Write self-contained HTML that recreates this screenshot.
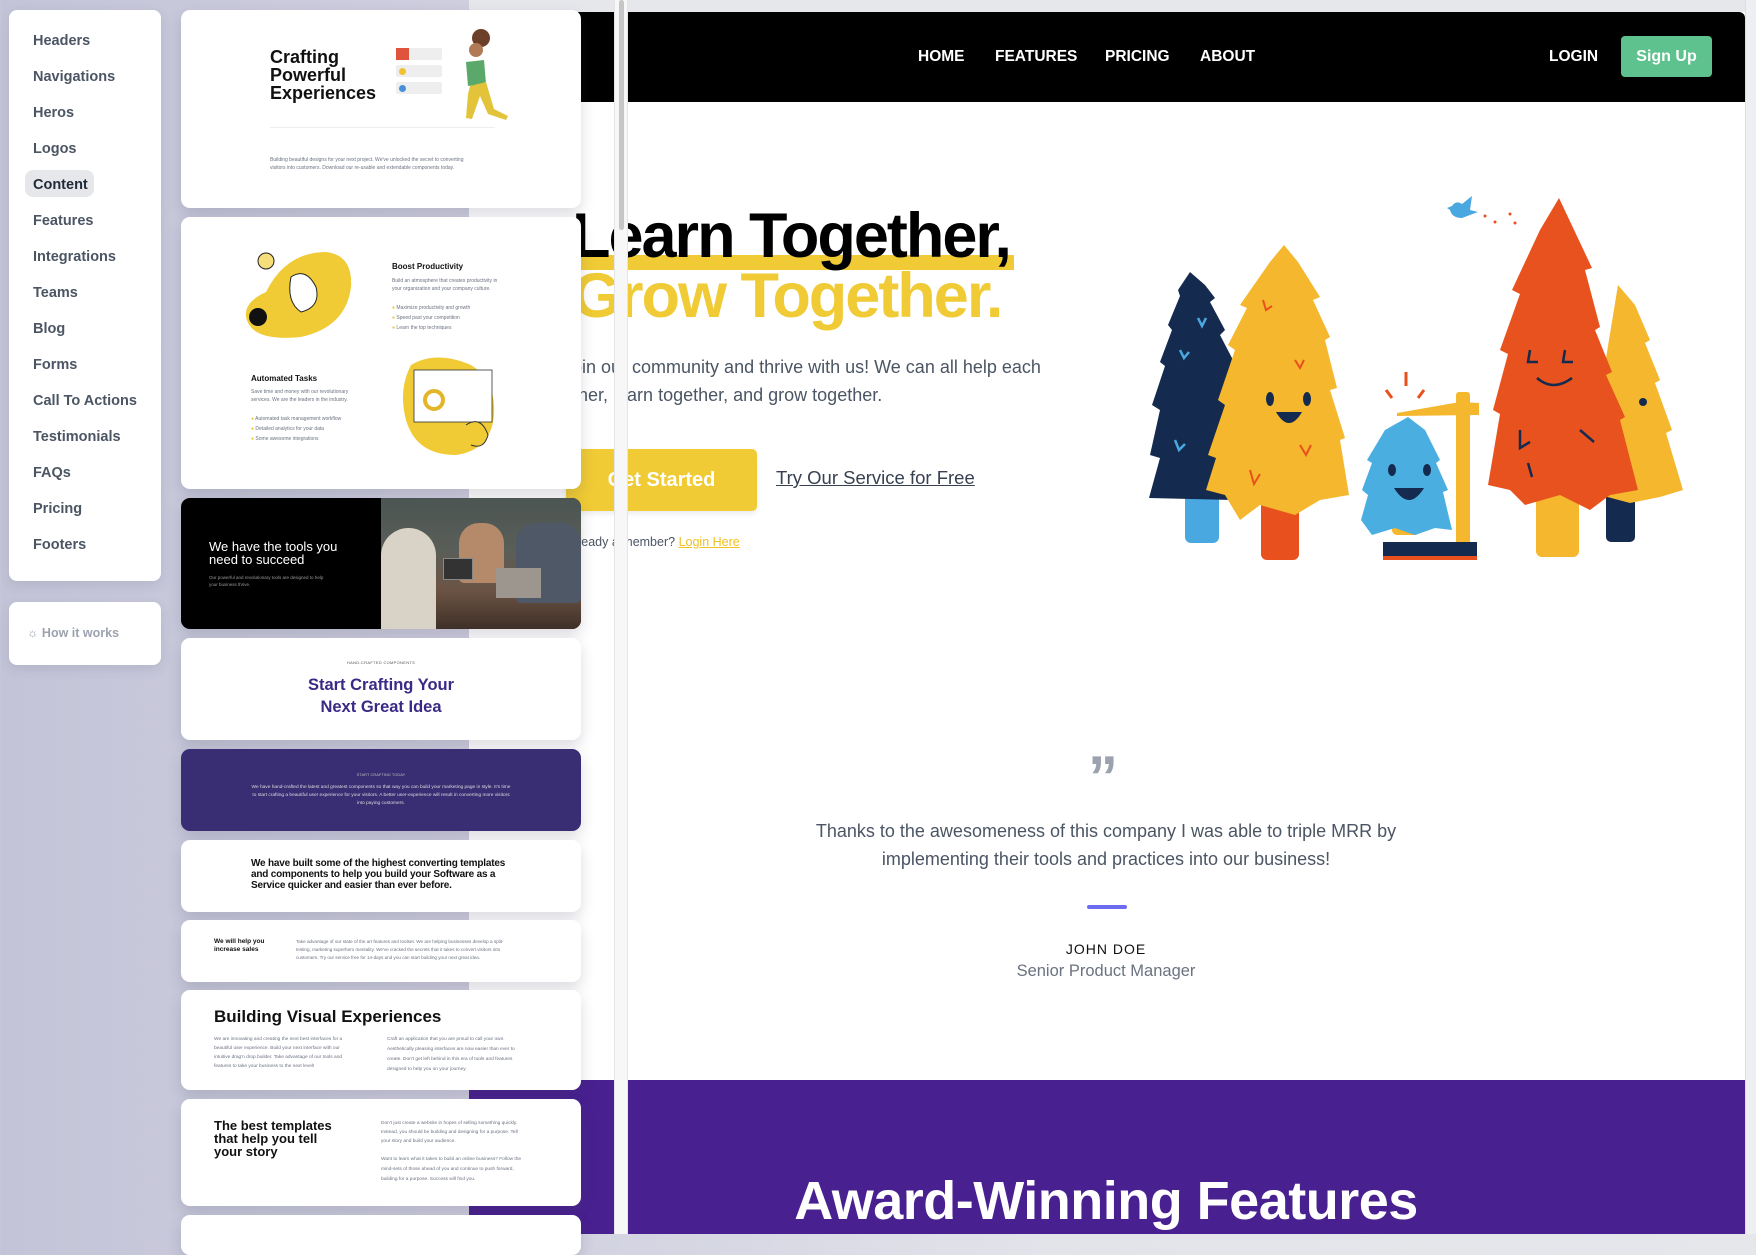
<!DOCTYPE html>
<html><head><meta charset="utf-8">
<style>
*{margin:0;padding:0;box-sizing:border-box}
body{width:1756px;height:1234px;overflow:hidden;position:relative;font-family:"Liberation Sans",sans-serif;background:linear-gradient(90deg,#c4c4d8 0%,#d0d0e0 30%,#e3e4ea 60%,#e5e7eb 100%)}
.a{position:absolute}
.card{position:absolute;left:181px;width:400px;background:#fff;border-radius:9px;box-shadow:0 6px 14px rgba(60,60,90,.18);overflow:hidden}
.side a{display:block;position:absolute;left:24px;color:#4b5563;font-weight:bold;font-size:14.5px;text-decoration:none}
.t{position:absolute;white-space:nowrap}
.tiny{font-size:5px;color:#6b7280;line-height:8px}
.nav{color:#fff;font-weight:bold;font-size:15.5px;top:48px}
</style></head><body>

<!-- underlying page -->
<div class="a" style="left:469px;top:0;width:1276px;height:1234px;background:#fff"></div>
<div class="a" style="left:469px;top:0;width:1287px;height:12px;background:#e5e7eb"></div>
<div class="a" style="left:1745px;top:0;width:11px;height:1234px;background:#eeeff2;border-left:1px solid #dcdde2"></div>
<div class="a" style="left:469px;top:12px;width:1276px;height:90px;background:#000;border-top-right-radius:6px"></div>
<div class="t nav" style="left:918px">HOME</div>
<div class="t nav" style="left:995px">FEATURES</div>
<div class="t nav" style="left:1105px">PRICING</div>
<div class="t nav" style="left:1200px">ABOUT</div>
<div class="t nav" style="left:1549px">LOGIN</div>
<div class="a" style="left:1621px;top:36px;width:91px;height:41px;background:#5ec28e;border-radius:4px;color:#fff;font-weight:bold;font-size:16px;text-align:center;line-height:41px">Sign Up</div>

<!-- hero -->
<div class="a" style="left:578px;top:255px;width:436px;height:15px;background:#f0cb35"></div>
<div class="t" style="left:572px;top:203px;font-size:63px;font-weight:900;letter-spacing:-2px;color:#000;line-height:66px">Learn Together,</div>
<div class="t" style="left:572px;top:263px;font-size:63px;font-weight:900;letter-spacing:-2px;color:#f0cb35;line-height:66px">Grow Together.</div>
<div class="a" style="left:563px;top:353px;width:500px;font-size:18px;line-height:28px;color:#4b5563">Join our community and thrive with us! We can all help each other, learn together, and grow together.</div>
<div class="a" style="left:566px;top:449px;width:191px;height:62px;background:#f0cb35;border-radius:5px;color:#fff;font-weight:bold;font-size:20px;text-align:center;line-height:62px;box-shadow:0 3px 6px rgba(0,0,0,.08)">Get Started</div>
<div class="t" style="left:776px;top:467px;font-size:18.5px;color:#374151;text-decoration:underline">Try Our Service for Free</div>
<div class="t" style="left:566px;top:535px;font-size:12.5px;color:#4b5563">Already a member? <span style="color:#f0c020;text-decoration:underline">Login Here</span></div>

<!-- trees -->
<svg class="a" style="left:1140px;top:190px" width="560" height="380" viewBox="1140 190 560 380">
<path d="M1447 208 L1452 206 Q1456 200 1462 204 L1472 196 L1470 210 L1478 212 L1462 218 Q1452 218 1450 210 Z" fill="#4aa8e0"/>
<circle cx="1485" cy="216" r="1.5" fill="#e8501e"/><circle cx="1495" cy="222" r="1.5" fill="#e8501e"/><circle cx="1510" cy="214" r="1.5" fill="#e8501e"/><circle cx="1515" cy="223" r="1.5" fill="#e8501e"/>
<rect x="1185" y="485" width="34" height="58" rx="6" fill="#4aa8e0"/>
<path d="M1190 272 L1205 285 L1215 298 L1210 302 L1225 330 L1220 335 L1233 360 L1233 500 L1149 498 L1160 458 L1150 455 L1160 410 L1152 405 L1165 366 L1160 362 L1172 330 L1168 325 L1180 296 L1178 290 Z" fill="#152a4f"/>
<path d="M1198 318 l4 8 l4 -8 M1180 350 l4 8 l5 -6 M1175 440 l4 10 l6 -6" stroke="#4aa8e0" stroke-width="2.5" fill="none"/>
<rect x="1261" y="495" width="38" height="65" rx="6" fill="#e8501e"/>
<path d="M1284 245 L1298 262 L1320 297 L1313 300 L1330 337 L1325 340 L1337 388 L1330 390 L1345 438 L1340 440 L1349 495 L1320 500 L1295 515 L1260 505 L1240 520 L1225 495 L1206 490 L1216 458 L1208 455 L1225 405 L1218 400 L1235 350 L1228 345 L1247 308 L1240 305 L1270 262 Z" fill="#f4b72e"/>
<ellipse cx="1270" cy="399" rx="4" ry="7" fill="#152a4f"/><ellipse cx="1307" cy="399" rx="4" ry="7" fill="#152a4f"/>
<path d="M1276 412 Q1289 434 1302 412 Z" fill="#152a4f"/>
<path d="M1263 300 l3 10 l6 -4 M1295 360 l5 8 l4 -8 M1300 445 l6 10 l5 -10 M1250 470 l4 14 l6 -10" stroke="#e8501e" stroke-width="2" fill="none"/>
<rect x="1392" y="510" width="28" height="25" rx="5" fill="#f4b72e"/>
<path d="M1408 417 L1425 430 L1440 460 L1436 463 L1448 490 L1443 492 L1452 530 L1435 528 L1415 535 L1395 528 L1372 535 L1361 520 L1368 495 L1362 490 L1372 463 L1367 460 L1385 430 Z" fill="#4aaee0"/>
<ellipse cx="1392" cy="470" rx="4" ry="6" fill="#152a4f"/><ellipse cx="1427" cy="470" rx="4" ry="6" fill="#152a4f"/>
<path d="M1394 488 Q1409 512 1424 488 Z" fill="#152a4f"/>
<path d="M1406 372 l0 14 M1386 390 l6 8 M1424 390 l-6 8" stroke="#e8501e" stroke-width="3"/>
<rect x="1456" y="392" width="14" height="158" rx="3" fill="#f4b72e"/>
<path d="M1397 413 L1460 402 L1479 403 L1479 415 L1397 416 Z" fill="#f4b72e"/>
<rect x="1383" y="542" width="94" height="16" fill="#152a4f"/><rect x="1383" y="556" width="94" height="4" fill="#e8501e"/>
<rect x="1606" y="490" width="29" height="52" rx="5" fill="#152a4f"/>
<path d="M1618 285 L1635 305 L1650 340 L1645 343 L1660 380 L1655 383 L1672 430 L1666 433 L1683 490 L1660 497 L1630 503 L1600 495 L1586 480 Z" fill="#f4b72e"/>
<circle cx="1643" cy="402" r="4" fill="#152a4f"/>
<rect x="1536" y="480" width="43" height="77" rx="6" fill="#f4b72e"/>
<path d="M1559 198 L1592 268 L1585 270 L1600 327 L1595 330 L1612 372 L1606 375 L1625 417 L1620 420 L1638 490 L1610 495 L1590 510 L1560 495 L1525 505 L1510 490 L1488 485 L1500 414 L1493 410 L1508 354 L1500 350 L1520 294 L1512 290 L1540 230 Z" fill="#e8521e"/>
<path d="M1530 350 l-2 12 l10 0 M1565 350 l-2 12 l10 0 M1537 378 Q1553 392 1572 378 M1520 430 l0 18 l10 -6 M1580 430 l14 12 M1528 463 l4 14" stroke="#152a4f" stroke-width="2.5" fill="none"/>
</svg>

<!-- testimonial -->
<div class="t" style="left:1088px;top:748px;font-size:60px;font-weight:bold;color:#9ca3af;line-height:60px">&#8221;</div>
<div class="a" style="left:780px;top:817px;width:652px;text-align:center;font-size:18px;line-height:28px;color:#4b5563">Thanks to the awesomeness of this company I was able to triple MRR by implementing their tools and practices into our business!</div>
<div class="a" style="left:1087px;top:905px;width:40px;height:4px;background:#6c6cf0;border-radius:2px"></div>
<div class="a" style="left:906px;top:941px;width:400px;text-align:center;font-size:14px;letter-spacing:1px;color:#111">JOHN DOE</div>
<div class="a" style="left:906px;top:962px;width:400px;text-align:center;font-size:16.5px;color:#6b7280">Senior Product Manager</div>

<!-- purple section -->
<div class="a" style="left:469px;top:1080px;width:1276px;height:154px;background:#48208f"></div>
<div class="a" style="left:706px;top:1170px;width:800px;text-align:center;font-size:54px;font-weight:900;color:#fff;letter-spacing:-.5px">Award-Winning Features</div>

<!-- scroll strip -->
<div class="a" style="left:614px;top:0;width:14px;height:1234px;background:#f7f7f8;border-left:1px solid #e5e5e8;border-right:1px solid #e5e5e8"></div>
<div class="a" style="left:619px;top:0;width:5px;height:230px;background:#c6c6c6;border-radius:3px"></div>

<!-- sidebar -->
<div class="a side" style="left:9px;top:10px;width:152px;height:571px;background:#fff;border-radius:8px;box-shadow:0 4px 12px rgba(60,60,90,.12)">
<div class="a" style="left:16px;top:160px;width:69px;height:27px;background:#e5e7eb;border-radius:8px"></div>
<a style="top:23px">Headers</a><a style="top:59px">Navigations</a><a style="top:95px">Heros</a><a style="top:131px">Logos</a>
<a style="top:167px;color:#1f2937">Content</a><a style="top:203px">Features</a><a style="top:239px">Integrations</a><a style="top:275px">Teams</a>
<a style="top:311px">Blog</a><a style="top:347px">Forms</a><a style="top:383px">Call To Actions</a><a style="top:419px">Testimonials</a>
<a style="top:455px">FAQs</a><a style="top:491px">Pricing</a><a style="top:527px">Footers</a>
</div>
<div class="a" style="left:9px;top:602px;width:152px;height:63px;background:#fff;border-radius:8px;box-shadow:0 4px 12px rgba(60,60,90,.12)">
<div class="t" style="left:18px;top:24px;font-size:12.5px;font-weight:bold;color:#9ca3af">☼ How it works</div>
</div>

<!-- card 1 -->
<div class="card" style="top:10px;height:198px">
<div class="t" style="left:89px;top:38px;font-size:18px;font-weight:900;line-height:18px;color:#111">Crafting<br>Powerful<br>Experiences</div>
<div class="a" style="left:215px;top:38px;width:46px;height:12px;background:#eee;border-radius:2px"></div><div class="a" style="left:215px;top:38px;width:13px;height:12px;background:#e0533c"></div>
<div class="a" style="left:215px;top:55px;width:46px;height:12px;background:#eee;border-radius:2px"></div><div class="a" style="left:218px;top:58px;width:7px;height:7px;background:#f0c232;border-radius:50%"></div>
<div class="a" style="left:215px;top:72px;width:46px;height:12px;background:#eee;border-radius:2px"></div><div class="a" style="left:218px;top:75px;width:7px;height:7px;background:#4a90d9;border-radius:50%"></div>
<svg class="a" style="left:255px;top:14px" width="80" height="110"><circle cx="45" cy="14" r="9" fill="#6b3f28"/><circle cx="40" cy="26" r="7" fill="#b07a56"/><path d="M30 38 L48 36 L50 60 L32 62Z" fill="#5aa86a"/><path d="M34 62 L50 58 L58 85 L72 92 L70 96 L52 90 L44 72 L36 95 L30 94 L32 70Z" fill="#e3c33a"/></svg>
<div class="a" style="left:89px;top:117px;width:225px;height:1px;background:#eee"></div>
<div class="t tiny" style="left:89px;top:146px">Building beautiful designs for your next project. We've unlocked the secret to converting<br>visitors into customers. Download our re-usable and extendable components today.</div>
</div>

<!-- card 2 -->
<div class="card" style="top:217px;height:272px">
<svg class="a" style="left:60px;top:30px" width="115" height="95"><path d="M25 45 Q45 5 85 5 Q112 8 110 40 Q105 80 60 90 Q10 95 5 70 Q3 55 25 45Z" fill="#f0cb35"/><circle cx="17" cy="70" r="9" fill="#111"/><circle cx="25" cy="14" r="8" fill="#f6df7a" stroke="#222"/><path d="M50 30 Q65 20 75 40 Q80 60 60 65 Q45 55 50 30Z" fill="#fff" stroke="#222"/></svg>
<div class="t" style="left:211px;top:45px;font-size:8px;font-weight:bold;color:#111">Boost Productivity</div>
<div class="t tiny" style="left:211px;top:60px">Build an atmosphere that creates productivity in<br>your organization and your company culture.</div>
<div class="t tiny" style="left:211px;top:86px;line-height:10px"><span style="color:#f0c232">●</span> Maximize productivity and growth<br><span style="color:#f0c232">●</span> Speed past your competition<br><span style="color:#f0c232">●</span> Learn the top techniques</div>
<div class="t" style="left:70px;top:157px;font-size:8px;font-weight:bold;color:#111">Automated Tasks</div>
<div class="t tiny" style="left:70px;top:171px">Save time and money with our revolutionary<br>services. We are the leaders in the industry.</div>
<div class="t tiny" style="left:70px;top:197px;line-height:10px"><span style="color:#f0c232">●</span> Automated task management workflow<br><span style="color:#f0c232">●</span> Detailed analytics for your data<br><span style="color:#f0c232">●</span> Some awesome integrations</div>
<svg class="a" style="left:215px;top:138px" width="110" height="105"><path d="M15 10 Q40 -5 75 10 Q100 25 98 60 Q95 95 60 100 Q20 100 10 65 Q2 35 15 10Z" fill="#f0cb35"/><rect x="18" y="15" width="78" height="52" fill="#fff" stroke="#333" stroke-width=".8"/><circle cx="38" cy="45" r="9" fill="none" stroke="#e3b52a" stroke-width="4"/><path d="M70 70 Q85 60 92 80 Q88 95 75 90" stroke="#333" fill="#f0cb35"/></svg>
</div>

<!-- card 3 -->
<div class="card" style="top:498px;height:131px;background:#000">
<div class="t" style="left:28px;top:42px;font-size:13px;color:#fff;line-height:13px">We have the tools you<br>need to succeed</div>
<div class="t" style="left:28px;top:76px;font-size:4.5px;color:#999;line-height:7px">Our powerful and revolutionary tools are designed to help<br>your business thrive.</div>
<div class="a" style="left:200px;top:0;width:200px;height:131px;background:linear-gradient(180deg,#4b5552 0%,#5a5e58 40%,#6c5444 70%,#3e3028 100%)"></div>
<div class="a" style="left:200px;top:30px;width:55px;height:101px;background:#d9d2c6;border-radius:30px 30px 0 0"></div>
<div class="a" style="left:278px;top:25px;width:45px;height:60px;background:#b58a6a;border-radius:20px 20px 5px 5px"></div>
<div class="a" style="left:335px;top:25px;width:65px;height:80px;background:#4e5866;border-radius:20px 20px 5px 5px"></div>
<div class="a" style="left:262px;top:60px;width:30px;height:22px;background:#333;border:1px solid #888"></div>
<div class="a" style="left:315px;top:70px;width:45px;height:30px;background:#9c968e"></div>
</div>

<!-- card 4 -->
<div class="card" style="top:638px;height:102px;text-align:center">
<div class="a" style="left:0;top:22px;width:400px;font-size:4px;color:#555;letter-spacing:.3px">HAND-CRAFTED COMPONENTS</div>
<div class="a" style="left:0;top:36px;width:400px;font-size:16.5px;font-weight:bold;color:#3b2a85;line-height:22px">Start Crafting Your<br>Next Great Idea</div>
</div>

<!-- card 5 -->
<div class="card" style="top:749px;height:82px;background:#392d73;text-align:center">
<div class="a" style="left:0;top:23px;width:400px;font-size:4px;color:#bbb">START CRAFTING TODAY</div>
<div class="a" style="left:70px;top:35px;width:260px;font-size:4.8px;color:#ddd;line-height:8px">We have hand-crafted the latest and greatest components so that way you can build your marketing page in style. It's time to start crafting a beautiful user experience for your visitors. A better user-experience will result in converting more visitors into paying customers.</div>
</div>

<!-- card 6 -->
<div class="card" style="top:840px;height:72px">
<div class="t" style="left:70px;top:18px;font-size:10px;font-weight:bold;color:#111;line-height:11px;letter-spacing:-.2px">We have built some of the highest converting templates<br>and components to help you build your Software as a<br>Service quicker and easier than ever before.</div>
</div>

<!-- card 7 -->
<div class="card" style="top:920px;height:62px">
<div class="t" style="left:33px;top:18px;font-size:6.5px;font-weight:bold;color:#111;line-height:8px">We will help you<br>increase sales</div>
<div class="t tiny" style="left:115px;top:18px;font-size:4.6px">Take advantage of our state of the art features and toolset. We are helping businesses develop a split-<br>testing, marketing superhero mentality. We've cracked the secrets that it takes to convert visitors into<br>customers. Try our service free for 14-days and you can start building your next great idea.</div>
</div>

<!-- card 8 -->
<div class="card" style="top:990px;height:100px">
<div class="t" style="left:33px;top:17px;font-size:17px;font-weight:900;color:#111">Building Visual Experiences</div>
<div class="t tiny" style="left:33px;top:45px;font-size:4.8px;line-height:9px">We are innovating and creating the next best interfaces for a<br>beautiful user experience. Build your next interface with our<br>intuitive drag'n drop builder. Take advantage of our tools and<br>features to take your business to the next level!</div>
<div class="t tiny" style="left:206px;top:45px;font-size:4.8px;line-height:10px">Craft an application that you are proud to call your own.<br>Aesthetically pleasing interfaces are now easier than ever to<br>create. Don't get left behind in this era of tools and features<br>designed to help you on your journey.</div>
</div>

<!-- card 9 -->
<div class="card" style="top:1099px;height:107px">
<div class="t" style="left:33px;top:20px;font-size:13px;font-weight:900;color:#111;line-height:13px">The best templates<br>that help you tell<br>your story</div>
<div class="t tiny" style="left:200px;top:20px;font-size:4.8px;line-height:9px">Don't just create a website in hopes of selling something quickly.<br>Instead, you should be building and designing for a purpose. Tell<br>your story and build your audience.</div>
<div class="t tiny" style="left:200px;top:56px;font-size:4.8px;line-height:10px">Want to learn what it takes to build an online business? Follow the<br>mind-sets of those ahead of you and continue to push forward,<br>building for a purpose. Success will find you.</div>
</div>

<!-- card 10 -->
<div class="card" style="top:1215px;height:40px"></div>

</body></html>
